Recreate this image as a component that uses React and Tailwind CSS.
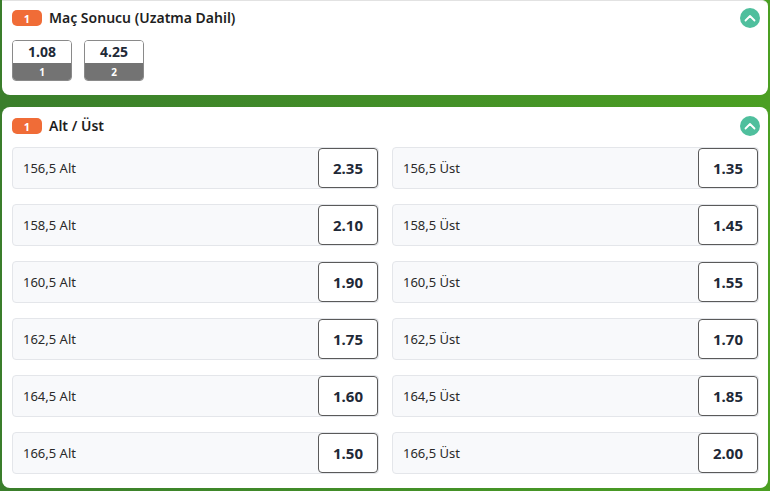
import React from "react";

const rows = [
  ["156,5", "2.35", "1.35"],
  ["158,5", "2.10", "1.45"],
  ["160,5", "1.90", "1.55"],
  ["162,5", "1.75", "1.70"],
  ["164,5", "1.60", "1.85"],
  ["166,5", "1.50", "2.00"],
];

function Chevron() {
  return (
    <div className="w-[20px] h-[20px] rounded-full bg-[#4fbf9d] flex items-center justify-center">
      <svg width="12" height="8" viewBox="0 0 12 8" fill="none">
        <path d="M1.5 6.5 L6 2 L10.5 6.5" stroke="white" strokeWidth="1.8" strokeLinecap="round" strokeLinejoin="round" />
      </svg>
    </div>
  );
}

function Header({ title }) {
  return (
    <div className="flex items-center h-[20px]">
      <div className="w-[30px] h-[16px] rounded-[5px] bg-[#f06c37] flex items-center justify-center text-white text-[11px] font-bold leading-none">1</div>
      <div className="ml-[7px] text-[14px] font-semibold text-[#1e1e1e] leading-none flex-1">{title}</div>
      <Chevron />
    </div>
  );
}

function OddBtn({ v, l }) {
  return (
    <div className="w-[60px] h-[41px] rounded-[4px] border border-[#8a8a8a] overflow-hidden flex flex-col">
      <div className="h-[22px] bg-white flex items-center justify-center text-[14px] font-bold text-[#1f2a37] leading-none">{v}</div>
      <div className="flex-1 bg-[#737373] flex items-center justify-center text-[10px] font-bold text-white leading-none">{l}</div>
    </div>
  );
}

function Row({ label, odd }) {
  return (
    <div className="h-[42px] rounded-[4px] border border-[#e4e6ea] bg-[#f8f9fb] flex items-center">
      <div className="flex-1 pl-[10px] pt-[1px] text-[13px] text-[#2a2a2a]">{label}</div>
      <div className="w-[60px] h-[40px] rounded-[4px] border border-[#5a5a5a] bg-white flex items-center justify-center text-[15px] font-bold text-[#1f2937]">{odd}</div>
    </div>
  );
}

export default function App() {
  return (
    <div
      className="w-[770px] h-[491px] bg-gradient-to-r from-[#3a7e2b] to-[#4b9f22] pl-[2px] pr-[2px] overflow-hidden"
      style={{ fontFamily: '"Noto Sans", "Open Sans", sans-serif' }}
    >
      <div className="bg-white rounded-b-[8px] rounded-tr-[6px] border-t border-[#e2e2e2] pt-[7px] pl-[10px] pr-[8px] pb-[14px]">
        <Header title="Maç Sonucu (Uzatma Dahil)" />
        <div className="flex gap-[12px] mt-[12px]">
          <OddBtn v="1.08" l="1" />
          <OddBtn v="4.25" l="2" />
        </div>
      </div>
      <div className="bg-white rounded-[8px] mt-[12px] pt-[9px] pl-[10px] pr-[8px] pb-[14px]">
        <Header title="Alt / Üst" />
        <div className="grid grid-cols-2 gap-x-[13px] gap-y-[15px] mt-[11px] pr-[1px]">
          {rows.map(([k, a, u]) => (
            <React.Fragment key={k}>
              <Row label={`${k} Alt`} odd={a} />
              <Row label={`${k} Üst`} odd={u} />
            </React.Fragment>
          ))}
        </div>
      </div>
    </div>
  );
}
